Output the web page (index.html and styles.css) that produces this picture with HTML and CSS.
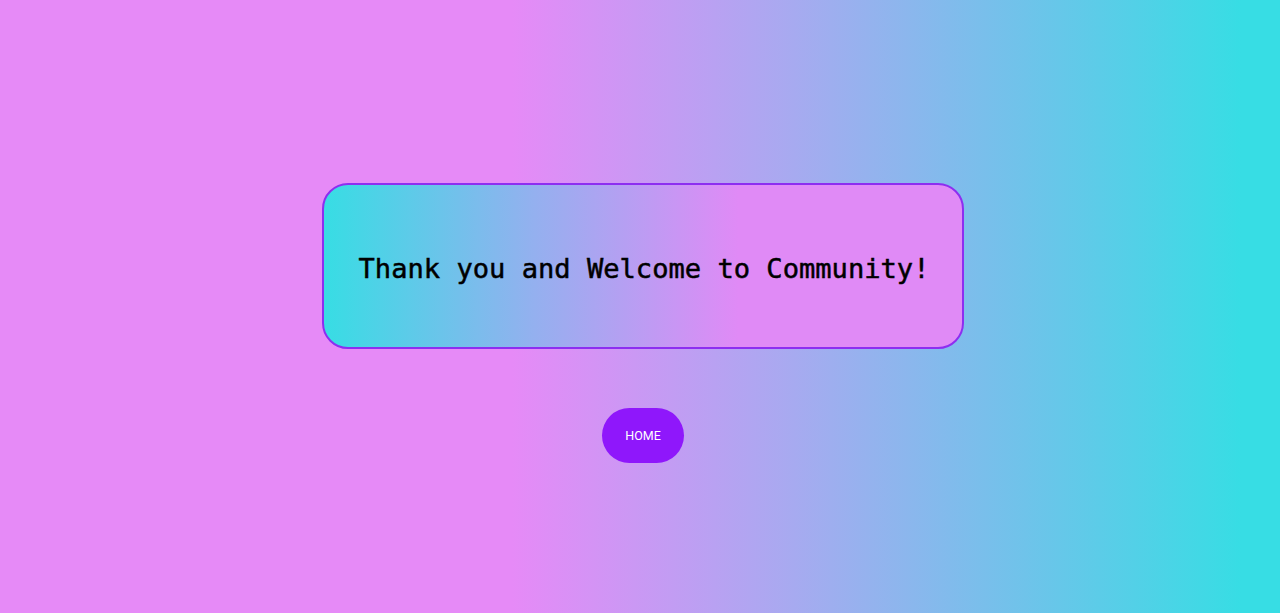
FILE: index.html
```html
<!DOCTYPE html>
<html lang="en">
<head>
<meta charset="utf-8">
<title>Thank you</title>
<link rel="stylesheet" href="styles.css">
</head>
<body>
<main class="page">
  <section class="card">
    <h1 class="card-title">Thank you and Welcome to Community!</h1>
  </section>
  <a class="home-btn" href="#">HOME</a>
</main>
</body>
</html>
```
FILE: styles.css
```css
html, body {
  margin: 0;
  padding: 0;
  height: 100%;
}
body {
  background: linear-gradient(to right, #e68af7 0%, #e68af7 40%, #a7aaf0 62%, #6fc3ea 80%, #37dde4 97%, #37dde4 100%);
  font-family: "DejaVu Sans Mono", "Liberation Mono", monospace;
}
.page {
  display: flex;
  flex-direction: column;
  align-items: center;
  padding: 183px 0 0 6px;
  gap: 59px;
  box-sizing: border-box;
  min-height: 100%;
}
.card {
  width: 642px;
  height: 166px;
  box-sizing: border-box;
  border: 2px solid #8d2ef0;
  border-radius: 26px;
  background: linear-gradient(to right, #37dde4 0%, #94b0ef 33%, #e08af6 65%, #e08af6 100%);
  display: flex;
  align-items: center;
  justify-content: center;
}
.card-title {
  margin: 0 0 0 2px;
  font-size: 27.1px;
  font-weight: normal;
  -webkit-text-stroke: 0.5px #000;
  color: #000;
  letter-spacing: 0;
  padding-top: 4px;
}
.home-btn {
  display: flex;
  align-items: center;
  justify-content: center;
  width: 82px;
  height: 55px;
  border-radius: 28px;
  background: #8f17fb;
  color: #fff;
  text-decoration: none;
  font-family: Roboto, "Liberation Sans", sans-serif;
  font-weight: 400;
  font-size: 12.5px;
}
```
